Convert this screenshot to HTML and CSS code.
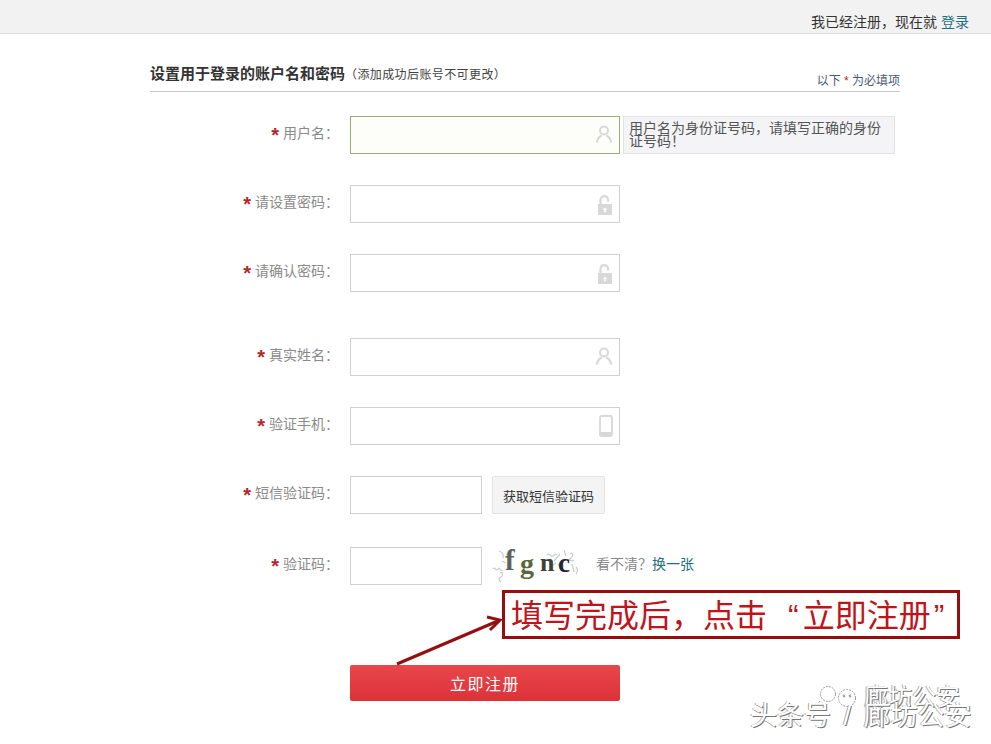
FILE: index.html
```html
<!DOCTYPE html>
<html lang="zh-CN">
<head>
  <meta charset="UTF-8">
  <title>注册</title>
  <link rel="stylesheet" href="styles.css">
</head>
<body>
  <div class="topbar">我已经注册，现在就 <a href="#">登录</a></div>

  <div class="main">
    <div class="section-title">
      <div class="title-left"><strong>设置用于登录的账户名和密码</strong><span class="title-note">（添加成功后账号不可更改）</span></div>
      <div class="required-note">以下 <em>*</em> 为必填项</div>
    </div>

    <div class="form-row first">
      <label class="row-label"><em>*</em> 用户名：</label>
      <div class="field active">
        <svg class="field-icon" viewBox="0 0 16 18"><circle cx="8" cy="5.500" r="4" /><path d="M1 17.500c.3-4.500 2.500-6 4.800-7M15 17.500c-.3-4.500-2.500-6-4.800-7" /></svg>
      </div>
      <div class="tip">用户名为身份证号码，请填写正确的身份证号码！</div>
    </div>
    <div class="form-row">
      <label class="row-label"><em>*</em> 请设置密码：</label>
      <div class="field">
        <svg class="field-icon lock" viewBox="0 0 16 20"><path class="shackle" d="M3.500 10V5a3.800 3.800 0 0 1 7.600 0v1.500" /><path class="lock-body" d="M1 9h14v11H1zM8 12.500l-2.500 2.500h1.700v2.500h1.600V15h1.700z" /></svg>
      </div>
    </div>
    <div class="form-row group-end">
      <label class="row-label"><em>*</em> 请确认密码：</label>
      <div class="field">
        <svg class="field-icon lock" viewBox="0 0 16 20"><path class="shackle" d="M3.500 10V5a3.800 3.800 0 0 1 7.600 0v1.500" /><path class="lock-body" d="M1 9h14v11H1zM8 12.500l-2.500 2.500h1.700v2.500h1.600V15h1.700z" /></svg>
      </div>
    </div>
    <div class="form-row">
      <label class="row-label"><em>*</em> 真实姓名：</label>
      <div class="field">
        <svg class="field-icon" viewBox="0 0 16 18"><circle cx="8" cy="5.500" r="4" /><path d="M1 17.500c.3-4.500 2.500-6 4.800-7M15 17.500c-.3-4.500-2.500-6-4.800-7" /></svg>
      </div>
    </div>
    <div class="form-row">
      <label class="row-label"><em>*</em> 验证手机：</label>
      <div class="field">
        <svg class="field-icon phone" viewBox="0 0 14 22"><rect x="1" y="1" width="12" height="20" rx="1.500" /><path class="phone-base" d="M1 18.500h12" /></svg>
      </div>
    </div>
    <div class="form-row">
      <label class="row-label"><em>*</em> 短信验证码：</label>
      <div class="field short"></div>
      <button class="sms-btn">获取短信验证码</button>
    </div>
    <div class="form-row captcha-row">
      <label class="row-label"><em>*</em> 验证码：</label>
      <div class="field short"></div>
      <div class="captcha">
        <svg class="captcha-noise" viewBox="0 0 90 38">
          <path d="M1 22c2-3 3 3 5 0s2 3 4 1M8 26c3-2 3 3 1 4s-3 3 0 5M7 4c3 1 5 3 4 7M14 7l5 3M10 14l4 2" />
          <path d="M55 8c3-3 3 3 6 1s2-3 4-1M62 14l6-7M66 18c4-4 7 1 3 4M72 3l2 6M78 7c3-2 4 2 1 4s0 4 3 2M80 17l2 8M84 20c2 2 2 4 0 7M58 20l6-4" />
        </svg>
        <span class="letter letter-f">f</span>
        <span class="letter letter-g">g</span>
        <span class="letter letter-n">n</span>
        <span class="letter letter-c">c</span>
      </div>
      <div class="captcha-help">看不清？<a href="#">换一张</a></div>
    </div>

    <button class="submit-btn">立即注册</button>
  </div>

  <svg class="arrow" viewBox="0 0 112 56">
    <path d="M3 52 105 8.500" />
    <path d="M93 5 106 8 96 18" />
  </svg>
  <div class="callout">填写完成后，点击<span class="quote-open">“</span>立即注册<span class="quote-close">”</span></div>

  <div class="watermark">
    <svg class="watermark-logo" viewBox="0 0 46 22">
      <circle cx="14" cy="8" r="7.500" />
      <circle cx="33" cy="12" r="8.500" />
      <path d="M6 15l-3 4 6-2" />
      <circle class="dot" cx="30" cy="10" r="1" />
      <circle class="dot" cx="36" cy="10" r="1" />
    </svg>
    <span class="watermark-top">廊坊公安</span>
    <span class="watermark-main">头条号 / 廊坊公安</span>
  </div>
</body>
</html>
```

FILE: styles.css
```css
* {
  margin: 0;
  padding: 0;
  box-sizing: border-box;
}

body {
  position: relative;
  height: 744px;
  overflow: hidden;
  background: #ffffff;
  color: #555555;
  font-family: "Liberation Sans", "Noto Sans CJK SC", sans-serif;
  font-size: 13px;
}

a {
  color: #1f6f7d;
  text-decoration: none;
}

em {
  font-style: normal;
  color: #b3262b;
}

.topbar {
  height: 34px;
  padding: 14px 22px 0 0;
  background: #f2f2f2;
  border-bottom: 1px solid #dddddd;
  color: #333333;
  font-size: 14px;
  line-height: 17px;
  text-align: right;
}

.main {
  width: 750px;
  margin-left: 150px;
}

.section-title {
  display: flex;
  justify-content: space-between;
  align-items: flex-end;
  height: 58px;
  padding-bottom: 2px;
  border-bottom: 1px solid #c9c9c9;
  color: #333333;
}

.title-left {
  padding-bottom: 6px;
}

.section-title strong {
  font-size: 15px;
  line-height: 19px;
}

.title-note {
  font-size: 12px;
  letter-spacing: 0.400px;
  color: #444444;
}

.required-note {
  color: #4a5a75;
  font-size: 12px;
  line-height: 16px;
}

.form-row {
  display: flex;
  align-items: center;
  height: 38px;
  margin-bottom: 31px;
}

.form-row.first {
  margin-top: 24px;
}

.form-row.group-end {
  margin-bottom: 46px;
}

.form-row.captcha-row {
  margin-top: 33px;
  margin-bottom: 80px;
}

.row-label {
  width: 200px;
  padding: 0 11px 6px 0;
  color: #8a8a8a;
  font-size: 14px;
  text-align: right;
}

.row-label em {
  font-size: 20px;
  font-weight: bold;
  line-height: 0;
  vertical-align: -4px;
}

.field {
  display: flex;
  align-items: center;
  justify-content: flex-end;
  width: 270px;
  height: 38px;
  padding-right: 7px;
  border: 1px solid #d0d0d0;
  background: #ffffff;
}

.field.active {
  border-color: #98ab7c;
  background: #fdfefa;
}

.field.short {
  width: 132px;
}

.field-icon {
  width: 16px;
  height: 18px;
  margin-bottom: 2px;
  fill: none;
  stroke: #d8d8d8;
  stroke-width: 2;
}

.field-icon.lock {
  width: 16px;
  height: 20px;
  margin: 2px -1px 0 0;
}

.field-icon.phone {
  width: 14px;
  height: 22px;
  margin: 0 -1px 0 0;
  stroke-width: 1.800;
}

.phone-base {
  stroke-width: 3;
}

.shackle {
  stroke: #d8d8d8;
  stroke-width: 2.200;
}

.lock-body {
  fill: #d8d8d8;
  fill-rule: evenodd;
  stroke: none;
}

.tip {
  width: 272px;
  height: 38px;
  margin-left: 3px;
  padding: 5px 5px 0;
  border: 1px solid #e3e3e3;
  background: #f4f4f6;
  color: #555555;
  font-size: 14px;
  line-height: 13px;
}

.sms-btn {
  width: 113px;
  height: 38px;
  margin-left: 10px;
  border: 1px solid #e3e3e3;
  border-radius: 2px;
  background: #f4f4f5;
  color: #333333;
  font-family: inherit;
  font-size: 13px;
}

.captcha {
  position: relative;
  width: 90px;
  height: 38px;
  margin-left: 10px;
}

.captcha-noise {
  position: absolute;
  left: 0;
  top: 0;
  width: 90px;
  height: 38px;
  fill: none;
  stroke: #c8ccc6;
  stroke-width: 1.200;
}

.letter {
  position: absolute;
  top: 0;
  font-family: "Liberation Serif", serif;
  font-weight: bold;
  line-height: 32px;
}

.letter-f {
  left: 13px;
  top: -3px;
  color: #5d6456;
  font-size: 29px;
}

.letter-g {
  left: 28px;
  top: 1px;
  color: #59683f;
  font-size: 28px;
}

.letter-n {
  left: 48px;
  color: #3c4238;
  font-size: 26px;
}

.letter-c {
  left: 66px;
  color: #1e2438;
  font-size: 27px;
}

.captcha-help {
  margin-left: 14px;
  padding-bottom: 6px;
  color: #888888;
  font-size: 14px;
}

.submit-btn {
  display: block;
  width: 270px;
  height: 36px;
  margin-left: 200px;
  border: none;
  border-radius: 2px;
  background: linear-gradient(#e8474c, #dc3238);
  color: #ffffff;
  font-family: inherit;
  font-size: 16px;
  letter-spacing: 1.500px;
}

.callout {
  position: absolute;
  left: 502px;
  top: 590px;
  width: 458px;
  height: 49px;
  padding-left: 6px;
  border: 3px solid #960f10;
  background: #ffffff;
  color: #c0141a;
  font-size: 32px;
  line-height: 46px;
  white-space: nowrap;
}

.quote-open {
  margin: 0 4px 0 21px;
}

.quote-close {
  margin-left: 3px;
}

.arrow {
  position: absolute;
  left: 394px;
  top: 612px;
  width: 112px;
  height: 56px;
  fill: none;
  stroke: #960f10;
  stroke-width: 3;
}

.watermark {
  position: absolute;
  left: 750px;
  top: 686px;
  width: 241px;
  height: 50px;
  color: #ffffff;
  white-space: nowrap;
  text-shadow: 1px 1px 0 #777777, -1px 0 0 #aaaaaa;
}

.watermark-logo {
  position: absolute;
  left: 64px;
  top: 0;
  width: 46px;
  height: 22px;
  fill: none;
  stroke: #999999;
  stroke-width: 1;
  stroke-dasharray: 2 1;
}

.watermark-logo .dot {
  fill: #999999;
}

.watermark-top {
  position: absolute;
  left: 114px;
  top: -3px;
  font-size: 24px;
  line-height: 28px;
}

.watermark-main {
  position: absolute;
  left: 0;
  top: 14px;
  font-size: 27px;
  line-height: 32px;
  word-spacing: 5px;
}
```
